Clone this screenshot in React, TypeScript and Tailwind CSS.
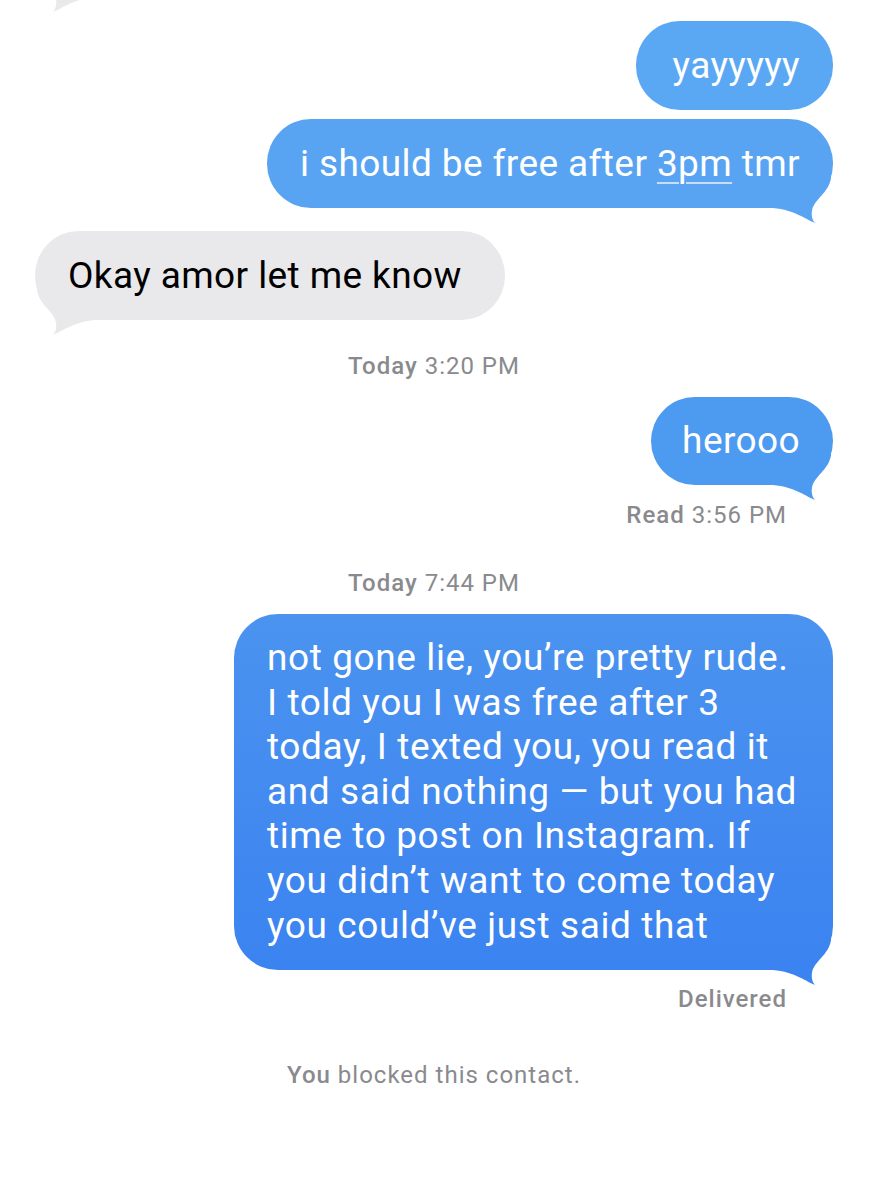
import React from "react";

const TAIL_PATH =
  "M -60 -40 L -2 -40 L -2 -30 C -4 -15, -20 -8, -21 3 C -22 8, -20 13, -18 15 C -26 12, -38 2, -60 0 Z";

function RightTail({ color }: { color: string }) {
  return (
    <svg
      className="absolute right-0 -bottom-[16px] w-[62px] h-[56px]"
      viewBox="-62 -40 62 56"
    >
      <path d={TAIL_PATH} fill={color} />
    </svg>
  );
}

function LeftTail({ color }: { color: string }) {
  return (
    <svg
      className="absolute left-0 -bottom-[16px] w-[62px] h-[56px] -scale-x-100"
      viewBox="-62 -40 62 56"
    >
      <path d={TAIL_PATH} fill={color} />
    </svg>
  );
}

const font = "font-['Roboto','Inter',sans-serif]";

export default function App() {
  return (
    <div className={`relative w-[869px] h-[1200px] bg-white overflow-hidden ${font}`}>
      {/* tail of previous gray bubble, off-screen */}
      <svg
        className="absolute left-[35px] -top-[43px] w-[62px] h-[56px] -scale-x-100"
        viewBox="-62 -40 62 56"
      >
        <path d={TAIL_PATH} fill="#e9e9eb" />
      </svg>

      <div className="flex flex-col pt-[21px] pl-[35px] pr-[36px]">
        {/* yayyyyy */}
        <div className="self-end relative rounded-[44px] bg-[#5aa8f3] pl-[37px] pr-[33px] py-[22px] text-white text-[37px] leading-[45px] tracking-[0.4px]">
          yayyyyy
        </div>

        {/* i should be free */}
        <div className="self-end relative mt-[9px]">
          <div className="relative z-10 rounded-[44px] bg-[#58a4f2] px-[33px] py-[22px] text-white text-[37px] leading-[45px] tracking-[0.4px]">
            i should be free after{" "}
            <span className="underline decoration-[#c9ddf7] decoration-2 underline-offset-[6px]">
              3pm
            </span>{" "}
            tmr
          </div>
          <RightTail color="#58a4f2" />
        </div>

        {/* gray */}
        <div className="self-start relative mt-[23px]">
          <div className="relative z-10 rounded-[44px] bg-[#e9e9eb] pl-[33px] pr-[43px] py-[22px] text-black text-[37px] leading-[45px] tracking-[0.4px]">
            Okay amor let me know
          </div>
          <LeftTail color="#e9e9eb" />
        </div>

        <div className="mt-[33px] text-center text-[24px] leading-[26px] tracking-[1px] text-[#8a8a8e]">
          <span className="font-medium">Today</span> 3:20 PM
        </div>

        {/* herooo */}
        <div className="self-end relative mt-[18px]">
          <div className="relative z-10 rounded-[44px] bg-[#4d9af1] pl-[31px] pr-[33px] py-[22px] text-white text-[37px] leading-[44px] tracking-[0.4px]">
            herooo
          </div>
          <RightTail color="#4d9af1" />
        </div>

        <div className="self-end mr-[46px] mt-[17px] text-[24px] leading-[26px] tracking-[1px] text-[#8a8a8e]">
          <span className="font-medium">Read</span> 3:56 PM
        </div>

        <div className="mt-[42px] text-center text-[24px] leading-[26px] tracking-[1px] text-[#8a8a8e]">
          <span className="font-medium">Today</span> 7:44 PM
        </div>

        {/* big message */}
        <div className="self-end relative mt-[18px]">
          <div className="relative z-10 w-[599px] rounded-[44px] bg-gradient-to-b from-[#4b93ef] to-[#3b83f0] pl-[33px] pr-[10px] py-[22px] text-white text-[37px] leading-[44.6px] tracking-[0.6px] whitespace-nowrap">
            not gone lie, you’re pretty rude.
            <br />
            I told you I was free after 3
            <br />
            today, I texted you, you read it
            <br />
            and said nothing — but you had
            <br />
            time to post on Instagram. If
            <br />
            you didn’t want to come today
            <br />
            you could’ve just said that
          </div>
          <RightTail color="#3b83f0" />
        </div>

        <div className="self-end mr-[46px] mt-[16px] text-[24px] leading-[26px] tracking-[1px] text-[#8a8a8e] font-medium">
          Delivered
        </div>

        <div className="mt-[50px] text-center text-[24px] leading-[26px] tracking-[1px] text-[#8a8a8e]">
          <span className="font-medium">You</span> blocked this contact.
        </div>
      </div>
    </div>
  );
}
